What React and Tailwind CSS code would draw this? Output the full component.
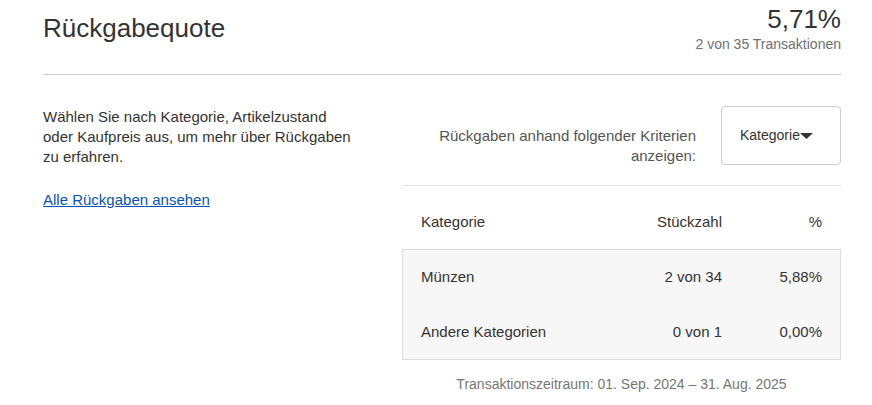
import React from "react";

const rows = [
  { name: "Münzen", count: "2 von 34", pct: "5,88%" },
  { name: "Andere Kategorien", count: "0 von 1", pct: "0,00%" },
];

function App() {
  return (
    <div
      className="min-h-screen bg-white text-[#333]"
      style={{ fontFamily: '"Liberation Sans", Arial, sans-serif' }}
    >
      <div className="ml-[43px] w-[798px] pt-[4px]">
        {/* header */}
        <div className="flex justify-between items-start h-[71px] border-b border-[#ccc]">
          <h1 className="mt-[9px] text-[26px] leading-[30px] font-normal">Rückgabequote</h1>
          <div className="text-right">
            <div className="text-[26px] leading-[30px]">5,71%</div>
            <div className="mt-[2px] text-[14px] leading-[16px] text-[#707070]">2 von 35 Transaktionen</div>
          </div>
        </div>

        <div className="flex justify-between pt-[31px]">
          {/* left column */}
          <div className="w-[313px] pt-[1px]">
            <p className="text-[15px] leading-5">
              Wählen Sie nach Kategorie, Artikelzustand oder Kaufpreis aus, um mehr über Rückgaben zu erfahren.
            </p>
            <a href="#" className="block mt-[23px] text-[15px] leading-5 text-[#0654ba] underline">
              Alle Rückgaben ansehen
            </a>
          </div>

          {/* right column */}
          <div className="w-[439px]">
            <div className="flex justify-end items-start gap-[25px] pb-[19px] border-b border-[#e5e5e5]">
              <div className="w-[280px] mt-[20px] text-right text-[15px] leading-5 text-[#555]">
                Rückgaben anhand folgender Kriterien anzeigen:
              </div>
              <button className="flex items-center w-[120px] h-[59px] pl-[18px] border border-[#ccc] rounded-[4px] bg-white text-[14px] text-[#333]">
                Kategorie
                <svg width="13" height="6" viewBox="0 0 13 6" className="mt-[1px]">
                  <path d="M0 0h13L6.5 6z" fill="#333" />
                </svg>
              </button>
            </div>

            <div className="flex pt-[26px] pb-[17px] pl-[19px] pr-[19px] text-[15px] leading-5">
              <div className="flex-1">Kategorie</div>
              <div className="text-right">Stückzahl</div>
              <div className="w-[100px] text-right">%</div>
            </div>

            <div className="border border-[#ddd] bg-[#f7f7f7]">
              {rows.map((r) => (
                <div key={r.name} className="flex pt-[17px] pb-[18px] pl-[18px] pr-[18px] text-[15px] leading-5 last:pb-[17px]">
                  <div className="flex-1">{r.name}</div>
                  <div className="text-right">{r.count}</div>
                  <div className="w-[100px] text-right">{r.pct}</div>
                </div>
              ))}
            </div>

            <div className="mt-[14px] text-center text-[14px] leading-5 text-[#767676]">
              Transaktionszeitraum: 01. Sep. 2024 – 31. Aug. 2025
            </div>
          </div>
        </div>
      </div>
    </div>
  );
}

export default App;
